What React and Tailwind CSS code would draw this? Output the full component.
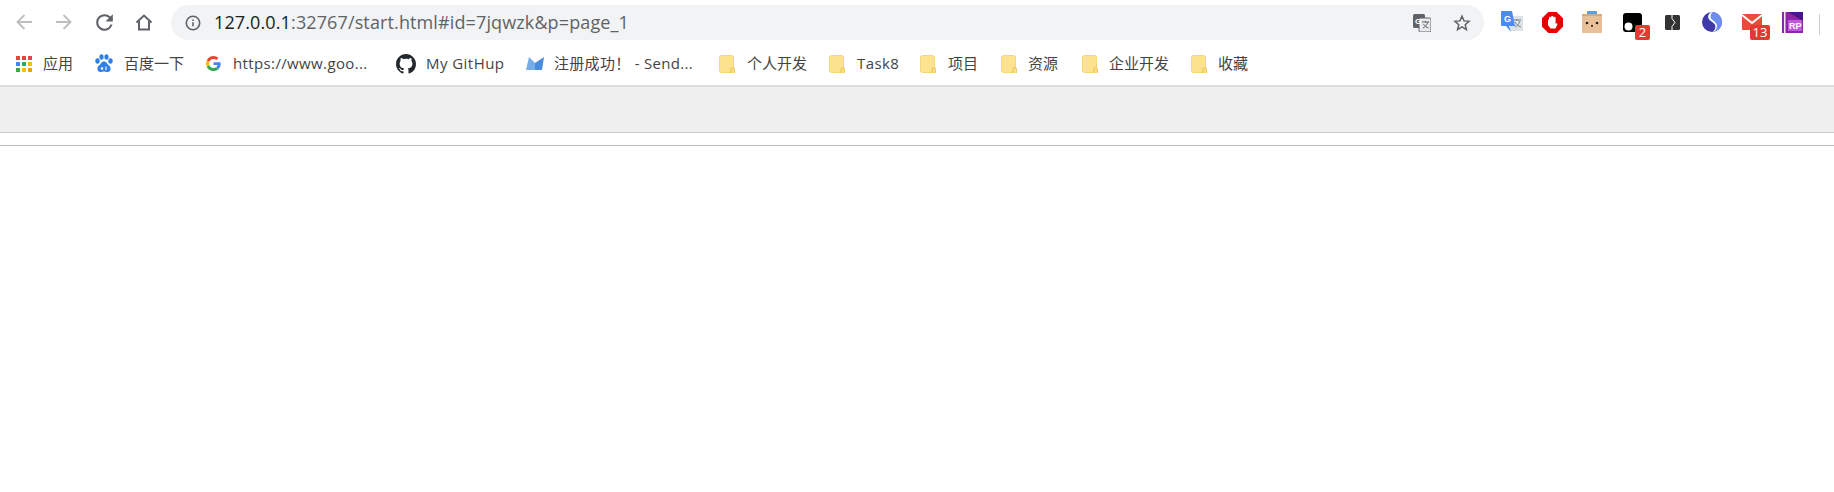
const uiFont = { fontFamily: "'Open Sans', 'Noto Sans CJK SC', sans-serif" };

function NavSlot({ children }) {
  return <div className="w-[40px] h-full flex items-center justify-center">{children}</div>;
}

function ExtSlot({ children, badge, badgeClass }) {
  return (
    <div className="relative w-[40px] h-full flex items-center justify-center">
      {children}
      {badge && (
        <span className={`absolute top-[23px] h-[15px] bg-[#e53935] rounded-[2px] text-white text-[13px] leading-[15px] text-center ${badgeClass}`}>
          {badge}
        </span>
      )}
    </div>
  );
}

function BackIcon({ color }) {
  return (
    <svg width="16" height="16" viewBox="0 0 16 16" fill="none" stroke={color} strokeWidth="1.800">
      <path d="M16 8H1.500M8.500 1 1.500 8l7 7" />
    </svg>
  );
}

function ForwardIcon({ color }) {
  return (
    <svg width="16" height="16" viewBox="0 0 16 16" fill="none" stroke={color} strokeWidth="1.800">
      <path d="M0 8h14.500M7.500 1l7 7-7 7" />
    </svg>
  );
}

function Folder() {
  return (
    <svg width="16" height="18" viewBox="0 0 16 18">
      <rect x="0.500" y="0.500" width="14" height="17" rx="2" fill="#fde28f" stroke="#f5d67a" />
      <path d="M12 18v-3.500a1.800 1.800 0 0 1 3.600 0V18" fill="#fbe08a" stroke="#e9bd45" strokeWidth="0.900" />
    </svg>
  );
}

function AppsIcon() {
  const colors = ['#e8453c', '#e8453c', '#e8453c', '#4285f4', '#34a853', '#fbbc05', '#34a853', '#fbbc05', '#f39c12'];
  return (
    <div className="grid grid-cols-3 gap-[2px] w-[16px] h-[16px]">
      {colors.map((c, i) => (
        <span key={i} className="w-[4px] h-[4px]" style={{ backgroundColor: c }} />
      ))}
    </div>
  );
}

function BaiduIcon() {
  return (
    <svg width="18" height="19" viewBox="0 0 18 19" fill="#2f7fe8">
      <ellipse cx="2.500" cy="7" rx="2.200" ry="2.800" />
      <ellipse cx="6.500" cy="3" rx="2.100" ry="2.800" />
      <ellipse cx="11.500" cy="3" rx="2.100" ry="2.800" />
      <ellipse cx="15.500" cy="7" rx="2.200" ry="2.800" />
      <path d="M9 7.500c2.500 0 3 2.500 5 4 2.500 2 2 6.500-1.500 6.500-1.500 0-2-.5-3.500-.5S7 18 5.500 18C2 18 1.500 13.500 4 11.500c2-1.500 2.500-4 5-4z" />
      <circle cx="7" cy="14.500" r="1.300" fill="#fff" />
      <path d="M11 12.500v3.500" stroke="#fff" strokeWidth="1.200" />
    </svg>
  );
}

function GoogleIcon() {
  return (
    <svg width="15" height="15" viewBox="0 0 48 48">
      <path fill="#ea4335" d="M24 9.500c3.500 0 6.700 1.300 9.100 3.500l6.800-6.800C35.800 2.400 30.200 0 24 0 14.600 0 6.500 5.400 2.600 13.200l7.900 6.200C12.400 13.600 17.700 9.500 24 9.500z" />
      <path fill="#4285f4" d="M47 24.500c0-1.600-.2-3.100-.4-4.500H24v9h12.900c-.6 3-2.200 5.500-4.800 7.200l7.700 6C44.300 37.900 47 31.800 47 24.500z" />
      <path fill="#fbbc05" d="M10.500 28.600C10 27.200 9.800 25.600 9.800 24s.3-3.200.7-4.600l-7.900-6.200C.9 16.500 0 20.100 0 24s.9 7.500 2.600 10.800l7.900-6.200z" />
      <path fill="#34a853" d="M24 48c6.500 0 11.900-2.100 15.800-5.800l-7.700-6c-2.100 1.400-4.900 2.300-8.100 2.300-6.300 0-11.600-4.200-13.500-9.900l-7.900 6.200C6.500 42.600 14.600 48 24 48z" />
    </svg>
  );
}

function GithubIcon() {
  return (
    <svg width="20" height="20" viewBox="0 0 16 16" fill="#24292e">
      <path d="M8 0C3.580 0 0 3.580 0 8c0 3.540 2.290 6.530 5.470 7.590.4.070.55-.17.55-.38 0-.19-.01-.82-.01-1.490-2.010.37-2.530-.49-2.690-.94-.09-.23-.48-.94-.82-1.130-.28-.15-.68-.52-.01-.53.630-.01 1.080.58 1.230.82.720 1.210 1.870.87 2.330.66.070-.52.280-.87.510-1.070-1.780-.2-3.640-.89-3.640-3.950 0-.87.310-1.590.82-2.150-.08-.2-.36-1.020.08-2.120 0 0 .67-.21 2.200.82.640-.18 1.320-.27 2-.27s1.360.09 2 .27c1.530-1.040 2.200-.82 2.200-.82.44 1.100.16 1.920.08 2.120.51.56.82 1.270.82 2.150 0 3.070-1.870 3.750-3.650 3.950.29.25.54.73.54 1.480 0 1.070-.01 1.930-.01 2.200 0 .21.15.46.55.38A8.010 8.010 0 0 0 16 8c0-4.420-3.580-8-8-8z" />
    </svg>
  );
}

function SendIcon() {
  return (
    <svg width="18" height="13" viewBox="0 0 18 13">
      <path d="M0 13 3 0l6 6v7z" fill="#76ace8" />
      <path d="M18 0l-2 13H9V6z" fill="#4a8ddc" />
    </svg>
  );
}

const bookmarks = [
  { label: '应用', w: 'w-[79px]', iw: 'w-[27px]', track: '', icon: <AppsIcon /> },
  { label: '百度一下', w: 'w-[111px]', iw: 'w-[29px]', track: '', icon: <BaiduIcon /> },
  { label: 'https://www.goo...', w: 'w-[190px]', iw: 'w-[27px]', track: 'tracking-[0.37px]', icon: <GoogleIcon /> },
  { label: 'My GitHup', w: 'w-[130px]', iw: 'w-[30px]', track: 'tracking-[0.45px]', icon: <GithubIcon /> },
  { label: '注册成功！ - Send...', w: 'w-[193px]', iw: 'w-[28px]', track: 'tracking-[0.3px]', icon: <SendIcon /> },
  { label: '个人开发', w: 'w-[110px]', iw: 'w-[28px]', track: '', icon: <Folder /> },
  { label: 'Task8', w: 'w-[91px]', iw: 'w-[28px]', track: 'tracking-[0.4px]', icon: <Folder /> },
  { label: '项目', w: 'w-[81px]', iw: 'w-[28px]', track: '', icon: <Folder /> },
  { label: '资源', w: 'w-[81px]', iw: 'w-[27px]', track: '', icon: <Folder /> },
  { label: '企业开发', w: 'w-[109px]', iw: 'w-[27px]', track: '', icon: <Folder /> },
  { label: '收藏', w: 'w-[70px]', iw: 'w-[27px]', track: '', icon: <Folder /> },
];

export default function App() {
  return (
    <div className="w-[1834px] h-[492px] bg-white overflow-hidden" style={uiFont}>
      {/* Toolbar */}
      <div className="h-[42px] flex pl-[4px] pt-[2px]">
        <NavSlot><BackIcon color="#bdbdbd" /></NavSlot>
        <NavSlot><ForwardIcon color="#bdbdbd" /></NavSlot>
        <NavSlot>
          <svg width="25" height="25" viewBox="0 0 24 24" fill="#5f6368">
            <path d="M17.650 6.350A7.960 7.960 0 0 0 12 4a8 8 0 1 0 7.730 10h-2.080A6 6 0 1 1 12 6c1.660 0 3.140.690 4.220 1.780L13 11h7V4l-2.350 2.350z" />
          </svg>
        </NavSlot>
        <NavSlot>
          <svg width="18" height="18" viewBox="0 0 18 18" fill="none" stroke="#5f6368" strokeWidth="2">
            <path d="M1.500 9.500 9 2.500l7.500 7M4 8v8.500h10V8" />
          </svg>
        </NavSlot>

        {/* Address bar */}
        <div className="ml-[7px] mt-[3px] h-[35px] w-[1313px] bg-[#f1f3f4] rounded-full flex items-center pl-[14px]">
          <svg width="16" height="16" viewBox="0 0 16 16" fill="none" stroke="#5f6368" strokeWidth="1.600">
            <circle cx="8" cy="8" r="6.700" />
            <path d="M8 7.200v4M8 4.400v1.600" />
          </svg>
          <div className="ml-[13px] text-[18px] text-[#202124] tracking-[0.12px]">
            127.0.0.1<span className="text-[#5f6368]">:32767/start.html#id=7jqwzk&amp;p=page_1</span>
          </div>
          <div className="ml-auto flex items-center gap-[22px] pr-[13px]">
            <svg width="18" height="18" viewBox="0 0 18 18">
              <rect x="0" y="0" width="12" height="14" rx="1.500" fill="#5f6368" />
              <rect x="6" y="4" width="12" height="14" rx="1.500" fill="#e8eaed" stroke="#5f6368" />
              <path d="M9 8h7M12.500 7v1.500M15 8c-1 3-3 5-5 6M10.500 10c1 2 3 3.500 5 4" stroke="#5f6368" fill="none" />
              <text x="2" y="10" fontSize="8" fontWeight="700" fill="#fff" fontFamily="'Liberation Sans', sans-serif">G</text>
            </svg>
            <svg width="18" height="18" viewBox="0 0 24 24" fill="none" stroke="#5f6368" strokeWidth="2">
              <path d="m12 3 2.700 6.200 6.700.6-5.100 4.400 1.600 6.600L12 17.300l-5.900 3.500 1.600-6.600-5.100-4.400 6.700-.6z" />
            </svg>
          </div>
        </div>

        {/* Extensions */}
        <div className="ml-[8px] flex">
          <ExtSlot>
            <svg width="22" height="22" viewBox="0 0 22 22">
              <rect x="9" y="5" width="13" height="15" fill="#dfe2e5" />
              <path d="M12 9h8M16 8v2M19 10c-1 3-3 5-5 6M14 11c1 2 3 4 6 5" stroke="#78838c" fill="none" />
              <path d="M1 0h10l3 15H8l2 6-5-6H1a1 1 0 0 1-1-1V1a1 1 0 0 1 1-1z" fill="#4c8bf5" />
              <text x="3" y="11" fontSize="9" fontWeight="700" fill="#fff" fontFamily="'Liberation Sans', sans-serif">G</text>
            </svg>
          </ExtSlot>
          <ExtSlot>
            <svg width="21" height="21" viewBox="0 0 21 21">
              <path d="M6.300 0h8.400L21 6.300v8.400L14.700 21H6.300L0 14.700V6.300z" fill="#e60000" />
              <path d="M6 9c0-1 .5-1.500 1-1.500V6c0-1.500 2-1.500 2-.3V5c0-1.500 2.500-1.500 2.500 0v.7c0-1.200 2.100-1.200 2.100.3v6c.8-1.200 2.300-.5 1.700.6L13.500 16.500H8.500L6 13z" fill="#fff" />
            </svg>
          </ExtSlot>
          <ExtSlot>
            <svg width="20" height="22" viewBox="0 0 20 22">
              <rect x="5" y="0" width="10" height="5" rx="1" fill="#42a5f5" />
              <rect x="0" y="3" width="20" height="19" rx="1" fill="#e8c09a" />
              <rect x="0" y="3" width="20" height="2" fill="#d2a97f" />
              <circle cx="5" cy="12" r="1.300" fill="#222" />
              <circle cx="15" cy="12" r="1.300" fill="#222" />
              <rect x="9" y="14" width="2" height="1.600" fill="#222" />
            </svg>
          </ExtSlot>
          <ExtSlot badge="2" badgeClass="left-[23px] w-[15px]">
            <svg width="19" height="19" viewBox="0 0 19 19">
              <rect width="19" height="19" rx="3" fill="#000" />
              <circle cx="5.500" cy="13.500" r="4" fill="#fff" />
            </svg>
          </ExtSlot>
          <ExtSlot>
            <svg width="15" height="15" viewBox="0 0 15 15">
              <rect width="15" height="15" rx="1.500" fill="#333" />
              <path d="M7 0v3.500l3 4-3 4V15" stroke="#fff" strokeWidth="1" fill="none" />
            </svg>
          </ExtSlot>
          <ExtSlot>
            <svg width="20" height="20" viewBox="0 0 20 20">
              <circle cx="10" cy="10" r="10" fill="#3f3aa8" />
              <path d="M9 0.200C6 2 5 5 7 7.500s6 3.500 6.500 6.500c.3 2.200-1 4.500-3 5.800 5-.2 9.500-4.300 9.500-9.800S15 .2 10 .1z" fill="#6f8ff0" />
              <path d="M8.500 0.500c-2.500 2-3 4.800-1.200 7 2 2.300 5.700 3.300 6.200 6.500.3 2-1 4.500-3 5.800l2-.5c1.500-1.500 2.500-3.500 2.500-5.500 0-4-6.500-5.500-6.500-9 0-1.500 1-3.500 2-4.700z" fill="#fff" />
            </svg>
          </ExtSlot>
          <ExtSlot badge="13" badgeClass="left-[18px] w-[20px]">
            <svg width="20" height="16" viewBox="0 0 20 16">
              <rect width="20" height="16" rx="1" fill="#e74c3c" />
              <path d="M0 1l10 8 10-8" stroke="#fff" strokeWidth="2" fill="none" />
            </svg>
          </ExtSlot>
          <ExtSlot>
            <svg width="21" height="21" viewBox="0 0 21 21">
              <rect width="21" height="21" fill="#8e24aa" />
              <rect x="2" y="0" width="1.500" height="21" fill="#f3e5f5" />
              <path d="M6 0h15v9z" fill="#4a148c" />
              <rect x="6" y="8" width="14" height="11" fill="#c158dc" />
              <text x="7" y="17" fontSize="9" fontWeight="700" fill="#fff" fontFamily="'Liberation Sans', sans-serif">RP</text>
            </svg>
          </ExtSlot>
        </div>
        <div className="ml-[7px] mt-[12px] w-px h-[21px] bg-[#d0d0d0]" />
      </div>

      {/* Bookmarks */}
      <div className="h-[43px] flex items-center pl-[16px] text-[15px] text-[#444]">
        {bookmarks.map((b) => (
          <div key={b.label} className={`flex items-center shrink-0 ${b.w}`}>
            <span className={`flex items-center shrink-0 ${b.iw}`}>{b.icon}</span>
            <span className={`whitespace-nowrap ${b.track}`}>{b.label}</span>
          </div>
        ))}
      </div>

      {/* Page */}
      <div className="h-[48px] border-t-2 border-b border-t-[#dcdcdc] border-b-[#c8c8c8] bg-[#f0f0f0]" />
      <div className="h-[13px] border-b border-[#bdbdbd]" />
    </div>
  );
}
